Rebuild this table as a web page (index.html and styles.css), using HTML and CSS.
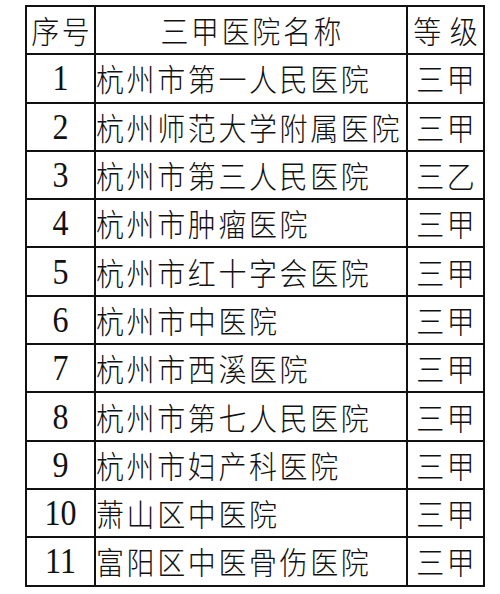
FILE: index.html
```html
<!DOCTYPE html>
<html lang="zh-CN">
<head>
<meta charset="utf-8">
<title>三甲医院名称</title>
<link rel="stylesheet" href="styles.css">
</head>
<body>
<table class="grid">
  <colgroup>
    <col class="c-no">
    <col class="c-name">
    <col class="c-level">
  </colgroup>
  <thead>
    <tr>
      <th class="center"><span class="cjk">序号</span></th>
      <th class="center"><span class="cjk">三甲医院名称</span></th>
      <th class="center"><span class="cjk level-head">等 级</span></th>
    </tr>
  </thead>
  <tbody>
    <tr><td class="center"><span class="num">1</span></td><td class="name"><span class="cjk">杭州市第一人民医院</span></td><td class="center"><span class="cjk">三甲</span></td></tr>
    <tr><td class="center"><span class="num">2</span></td><td class="name"><span class="cjk">杭州师范大学附属医院</span></td><td class="center"><span class="cjk">三甲</span></td></tr>
    <tr><td class="center"><span class="num">3</span></td><td class="name"><span class="cjk">杭州市第三人民医院</span></td><td class="center"><span class="cjk">三乙</span></td></tr>
    <tr><td class="center"><span class="num">4</span></td><td class="name"><span class="cjk">杭州市肿瘤医院</span></td><td class="center"><span class="cjk">三甲</span></td></tr>
    <tr><td class="center"><span class="num">5</span></td><td class="name"><span class="cjk">杭州市红十字会医院</span></td><td class="center"><span class="cjk">三甲</span></td></tr>
    <tr><td class="center"><span class="num">6</span></td><td class="name"><span class="cjk">杭州市中医院</span></td><td class="center"><span class="cjk">三甲</span></td></tr>
    <tr><td class="center"><span class="num">7</span></td><td class="name"><span class="cjk">杭州市西溪医院</span></td><td class="center"><span class="cjk">三甲</span></td></tr>
    <tr><td class="center"><span class="num">8</span></td><td class="name"><span class="cjk">杭州市第七人民医院</span></td><td class="center"><span class="cjk">三甲</span></td></tr>
    <tr><td class="center"><span class="num">9</span></td><td class="name"><span class="cjk">杭州市妇产科医院</span></td><td class="center"><span class="cjk">三甲</span></td></tr>
    <tr><td class="center"><span class="num">10</span></td><td class="name"><span class="cjk">萧山区中医院</span></td><td class="center"><span class="cjk">三甲</span></td></tr>
    <tr><td class="center"><span class="num">11</span></td><td class="name"><span class="cjk">富阳区中医骨伤医院</span></td><td class="center"><span class="cjk">三甲</span></td></tr>
  </tbody>
</table>
</body>
</html>
```
FILE: styles.css
```css
html, body {
  margin: 0;
  padding: 0;
  background: #ffffff;
}

body {
  padding: 5px 0 0 25px;
  color: #111111;
  font-family: "Noto Sans CJK SC", "Noto Sans", sans-serif;
}

.grid {
  border-collapse: collapse;
  table-layout: fixed;
  width: 458px;
  border: 2px solid #111111;
}

.c-no { width: 69px; }
.c-name { width: 312px; }
.c-level { width: 77px; }

.grid tr {
  height: 48.3px;
}

.grid th,
.grid td {
  border: 2px solid #111111;
  padding: 0;
  vertical-align: middle;
  font-weight: normal;
  line-height: 1;
  white-space: nowrap;
}

.center { text-align: center; }

.name {
  text-align: left;
  padding-left: 3px;
}

.cjk {
  display: inline-block;
  font-family: "Noto Sans CJK SC", sans-serif;
  font-size: 28px;
  font-weight: 300;
  letter-spacing: 2.6px;
  transform: scaleY(1.1);
}

.center .cjk {
  margin-right: -2.6px;
}

.level-head {
  word-spacing: -3px;
}

.num {
  display: inline-block;
  font-family: "Liberation Serif", "Times New Roman", serif;
  font-size: 32px;
  transform: scaleY(1.1);
}
```
